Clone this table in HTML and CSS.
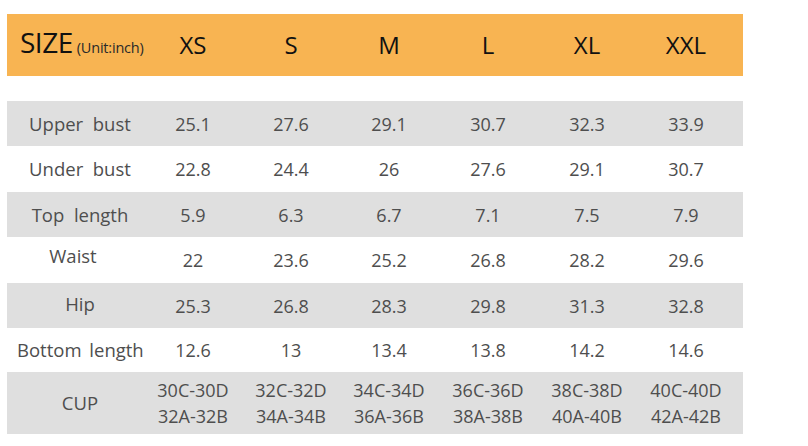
FILE: index.html
```html
<!DOCTYPE html>
<html lang="en">
<head>
<meta charset="utf-8">
<title>Size chart</title>
<link rel="stylesheet" href="styles.css">
</head>
<body>
<div class="chart">
  <div class="row head">
    <div class="label"><span class="size">SIZE</span><span class="unit">(Unit:inch)</span></div>
    <div>XS</div><div>S</div><div>M</div><div>L</div><div>XL</div><div>XXL</div>
  </div>
  <div class="gap"></div>
  <div class="row gray">
    <div class="label">Upper&nbsp; bust</div>
    <div>25.1</div><div>27.6</div><div>29.1</div><div>30.7</div><div>32.3</div><div>33.9</div>
  </div>
  <div class="row tall">
    <div class="label">Under&nbsp; bust</div>
    <div>22.8</div><div>24.4</div><div>26</div><div>27.6</div><div>29.1</div><div>30.7</div>
  </div>
  <div class="row gray">
    <div class="label">Top&nbsp; length</div>
    <div>5.9</div><div>6.3</div><div>6.7</div><div>7.1</div><div>7.5</div><div>7.9</div>
  </div>
  <div class="row tall">
    <div class="label waist">Waist</div>
    <div>22</div><div>23.6</div><div>25.2</div><div>26.8</div><div>28.2</div><div>29.6</div>
  </div>
  <div class="row gray">
    <div class="label hip">Hip</div>
    <div>25.3</div><div>26.8</div><div>28.3</div><div>29.8</div><div>31.3</div><div>32.8</div>
  </div>
  <div class="row short">
    <div class="label">Bottom length</div>
    <div>12.6</div><div>13</div><div>13.4</div><div>13.8</div><div>14.2</div><div>14.6</div>
  </div>
  <div class="row gray cup">
    <div class="label">CUP</div>
    <div>30C-30D<br>32A-32B</div>
    <div>32C-32D<br>34A-34B</div>
    <div>34C-34D<br>36A-36B</div>
    <div>36C-36D<br>38A-38B</div>
    <div>38C-38D<br>40A-40B</div>
    <div>40C-40D<br>42A-42B</div>
  </div>
</div>
</body>
</html>
```
FILE: styles.css
```css
html, body {
  margin: 0;
  padding: 0;
  background: #ffffff;
}

body {
  font-family: "Open Sans", "Noto Sans", "Liberation Sans", sans-serif;
  color: #4e4e4e;
}

.chart {
  width: 736px;
  margin: 14px 0 0 7px;
}

.row {
  display: grid;
  grid-template-columns: 136px 100px 96px 100px 98px 100px 98px 8px;
  height: 45px;
  align-items: center;
  font-size: 18px;
  line-height: 24px;
  text-align: center;
}

.row > div {
  white-space: nowrap;
}

.row .label {
  padding-left: 10px;
  font-size: 18.5px;
}

.row.tall {
  height: 46px;
}

.row.short {
  height: 44px;
}

.gray {
  background: #dfdfdf;
}

.head {
  height: 62px;
  background: #f8b452;
  color: #111111;
  font-size: 24px;
  font-weight: 500;
  line-height: 30px;
}

.head .label {
  padding-left: 13px;
  text-align: left;
}

.size {
  font-size: 28px;
  letter-spacing: -0.5px;
}

.unit {
  font-size: 14.5px;
  font-weight: 400;
  margin-left: 4px;
  letter-spacing: -0.2px;
  color: #2a2a2a;
}

.gap {
  height: 25px;
}

.label.waist {
  padding-left: 0;
  padding-right: 4px;
  position: relative;
  top: -4px;
}

.label.hip {
  position: relative;
  top: -2px;
}

.short .label {
  word-spacing: 3px;
}

.cup {
  height: 62px;
  line-height: 26px;
}
```
